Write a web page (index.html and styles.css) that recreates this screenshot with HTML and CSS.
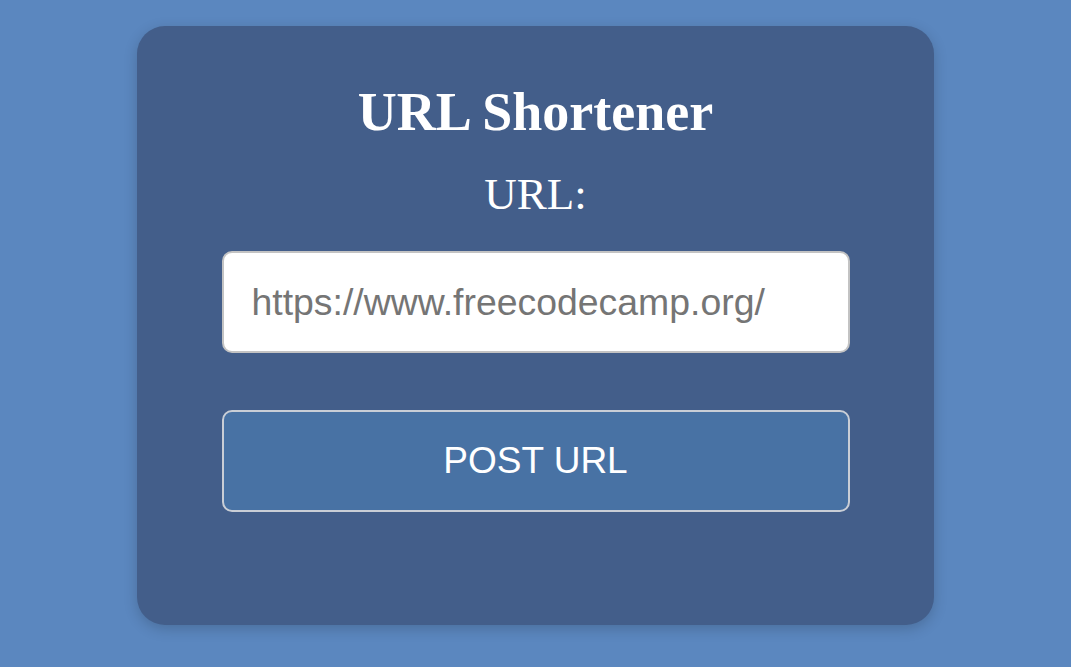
FILE: index.html
```html
<!DOCTYPE html>
<html>
<head>
<meta charset="utf-8">
<link rel="stylesheet" href="styles.css">
</head>
<body>
<main class="card">
  <h1 class="title">URL Shortener</h1>
  <form class="form">
    <label class="label" for="url">URL:</label>
    <input class="field" id="url" type="text" placeholder="https://www.freecodecamp.org/">
    <button class="submit" type="button">POST URL</button>
  </form>
</main>
</body>
</html>
```

FILE: styles.css
```css
html, body {
  margin: 0;
  padding: 0;
}
body {
  background: #5b87bf;
  font-family: "Liberation Serif", "Times New Roman", serif;
  color: #fff;
  height: 667px;
  overflow: hidden;
}
.card {
  box-sizing: border-box;
  width: 797px;
  height: 599px;
  margin: 26px auto 0;
  background: #435e8a;
  border-radius: 28px;
  box-shadow: 0 4px 14px rgba(0, 0, 0, 0.18);
  padding-top: 56px;
  display: flex;
  flex-direction: column;
  align-items: center;
}
.title {
  margin: 0;
  font-size: 54px;
  line-height: 61px;
  font-weight: bold;
}
.form {
  display: flex;
  flex-direction: column;
  align-items: center;
  margin-top: 26px;
}
.label {
  font-size: 45px;
  line-height: 50px;
}
.field, .submit {
  box-sizing: border-box;
  width: 628px;
  height: 102px;
  border-radius: 10px;
  border: 2px solid #c3c3c3;
  font-family: "Liberation Sans", Arial, sans-serif;
  font-size: 37px;
}
.field {
  margin-top: 32px;
  background: #fff;
  padding: 0 28px;
  color: #333;
  outline: none;
  font-size: 37.4px;
}
.field::placeholder {
  color: #757575;
}
.submit {
  margin-top: 57px;
  background: #4872a4;
  color: #fff;
  border-color: #c9ced6;
}
```
